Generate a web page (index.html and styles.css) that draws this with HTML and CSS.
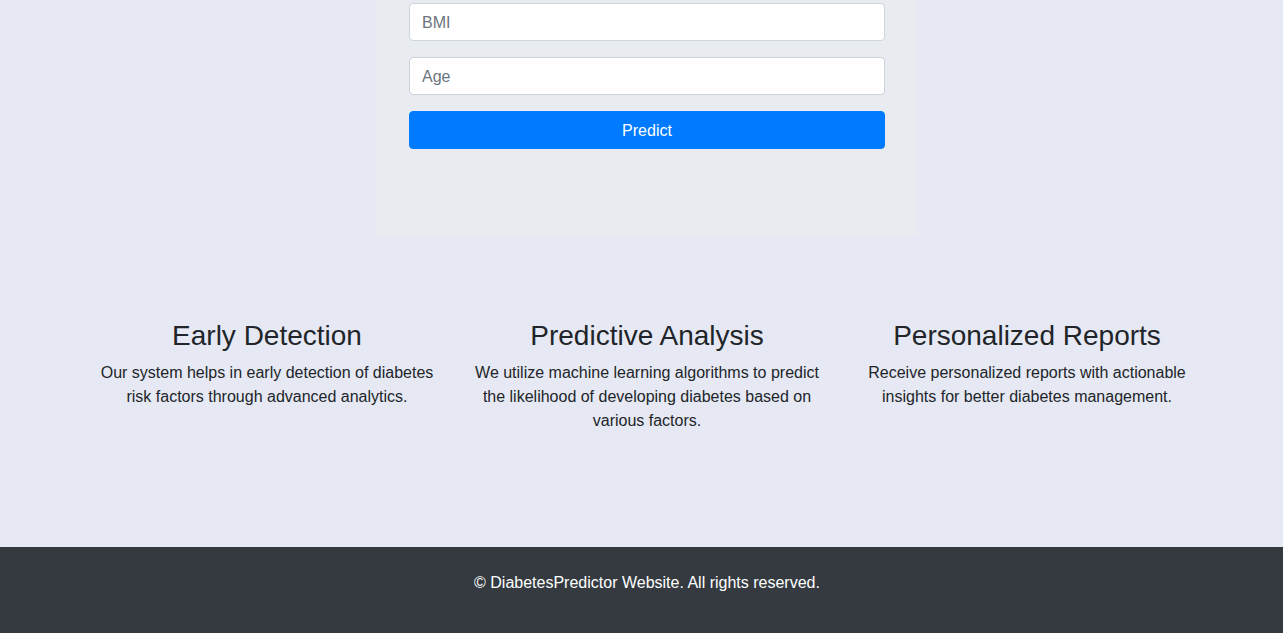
FILE: index.html
```html
<!DOCTYPE html>
<html lang="en">
<head>
<meta charset="utf-8">
<title>Diabetes Predictor</title>
<link rel="stylesheet" href="styles.css">
</head>
<body>
<main class="page">
  <section class="card">
    <form class="form">
      <input class="field" type="text" placeholder="BMI">
      <input class="field" type="text" placeholder="Age">
      <button class="btn" type="button">Predict</button>
    </form>
  </section>
  <section class="features">
    <div class="feature">
      <h3 class="feature-title">Early Detection</h3>
      <p class="feature-text">Our system helps in early detection of diabetes risk factors through advanced analytics.</p>
    </div>
    <div class="feature">
      <h3 class="feature-title">Predictive Analysis</h3>
      <p class="feature-text">We utilize machine learning algorithms to predict the likelihood of developing diabetes based on various factors.</p>
    </div>
    <div class="feature">
      <h3 class="feature-title">Personalized Reports</h3>
      <p class="feature-text">Receive personalized reports with actionable insights for better diabetes management.</p>
    </div>
  </section>
</main>
<footer class="footer">
  <p class="footer-text">© DiabetesPredictor Website. All rights reserved.</p>
</footer>
</body>
</html>
```
FILE: styles.css
```css
* { box-sizing: border-box; }
html, body { margin: 0; padding: 0; }
body {
  background: #e6e9f4;
  font-family: "Liberation Sans", Arial, sans-serif;
  font-size: 16px;
  line-height: 1.5;
  color: #212529;
}
.page {
  padding-left: 11px;
  display: flex;
  flex-direction: column;
  align-items: center;
  padding-bottom: 114px;
}
.card {
  width: 540px;
  background: #e8ebef;
  padding: 3px 32px 87px 32px;
}
.form {
  display: flex;
  flex-direction: column;
  gap: 16px;
}
.field {
  display: block;
  width: 100%;
  height: 38px;
  padding: 7px 12px 5px;
  font: inherit;
  color: #495057;
  background: #fff;
  border: 1px solid #ced4da;
  border-radius: 4px;
}
.field::placeholder { color: #6c757d; }
.btn {
  display: block;
  width: 100%;
  height: 38px;
  padding: 2px 12px 0;
  font: inherit;
  color: #fff;
  background: #007bff;
  border: 1px solid #007bff;
  border-radius: 4px;
}
.features {
  width: 1140px;
  display: grid;
  grid-template-columns: repeat(3, 1fr);
  margin-top: 83px;
  text-align: center;
}
.feature { padding: 0 15px; }
.feature-title {
  margin: 0 0 8px;
  font-size: 28px;
  font-weight: 500;
  line-height: 1.2;
}
.feature-text { margin: 0; }
.footer {
  background: #343a40;
  color: #fff;
  text-align: center;
  padding: 24px 0 39px 11px;
}
.footer-text { margin: 0; }
```
